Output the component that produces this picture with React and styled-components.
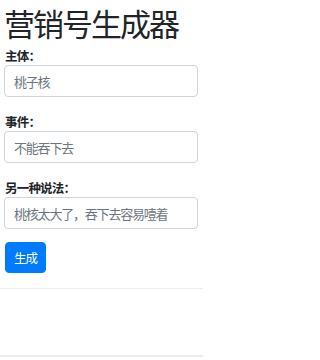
import React, { useState } from 'react';
import styled, { createGlobalStyle } from 'styled-components';

const GlobalStyle = createGlobalStyle`
  html, body {
    margin: 0;
    padding: 0;
    background: #fff;
  }
  body {
    font-family: 'Noto Sans CJK SC', 'Noto Sans', sans-serif;
    color: #212529;
  }
  #root {
    width: 203px;
  }
  * {
    box-sizing: border-box;
  }
`;

const Container = styled.div`
  padding: 0 5px 0 4px;
`;

const Title = styled.h1`
  margin: 0 0 2px 0;
  font-size: 31px;
  line-height: 45px;
  font-weight: 400;
  letter-spacing: -2px;
`;

const FormGroup = styled.div`
  display: flex;
  flex-direction: column;
  margin-bottom: ${p => (p.last ? '13px' : '16px')};
`;

const Label = styled.label`
  font-size: 12.5px;
  line-height: 18px;
  font-weight: 700;
  letter-spacing: -0.8px;
  padding-left: 1px;
`;

const Input = styled.input`
  width: 100%;
  height: 32px;
  padding: 0 6px 0 9px;
  font-family: inherit;
  font-size: 13px;
  letter-spacing: -1.2px;
  color: #495057;
  background: #fff;
  border: 1px solid #ced4da;
  border-radius: 4px;
  outline: none;

  &::placeholder {
    color: #6c757d;
  }
`;

const Button = styled.button`
  align-self: flex-start;
  height: 31px;
  padding: 0 8px;
  margin-left: 1px;
  font-family: inherit;
  font-size: 12.5px;
  letter-spacing: -1px;
  color: #fff;
  background: #007bff;
  border: 1px solid #007bff;
  border-radius: 4px;
  cursor: pointer;
`;

const Output = styled.div`
  margin-top: 15px;
  height: 69px;
  border-top: 1px solid #ececec;
  border-bottom: 2px solid #ebebeb;
`;

const fields = [
  { name: 'subject', label: '主体：', placeholder: '桃子核' },
  { name: 'event', label: '事件：', placeholder: '不能吞下去' },
  { name: 'other', label: '另一种说法：', placeholder: '桃核太大了，吞下去容易噎着' },
];

const App = () => {
  const [values, setValues] = useState({ subject: '', event: '', other: '' });
  const [result, setResult] = useState('');

  const generate = () => {
    const s = values.subject || '桃子核';
    const e = values.event || '不能吞下去';
    const o = values.other || '桃核太大了，吞下去容易噎着';
    setResult(`${s}${e}是怎么回事呢？其实就是${o}。`);
  };

  return (
    <>
      <GlobalStyle />
      <Container>
        <Title>营销号生成器</Title>
        {fields.map((f, i) => (
          <FormGroup key={f.name} last={i === fields.length - 1}>
            <Label htmlFor={f.name}>{f.label}</Label>
            <Input
              id={f.name}
              placeholder={f.placeholder}
              value={values[f.name]}
              onChange={ev => setValues({ ...values, [f.name]: ev.target.value })}
            />
          </FormGroup>
        ))}
        <Button onClick={generate}>生成</Button>
      </Container>
      <Output>{result}</Output>
    </>
  );
};

export default App;
